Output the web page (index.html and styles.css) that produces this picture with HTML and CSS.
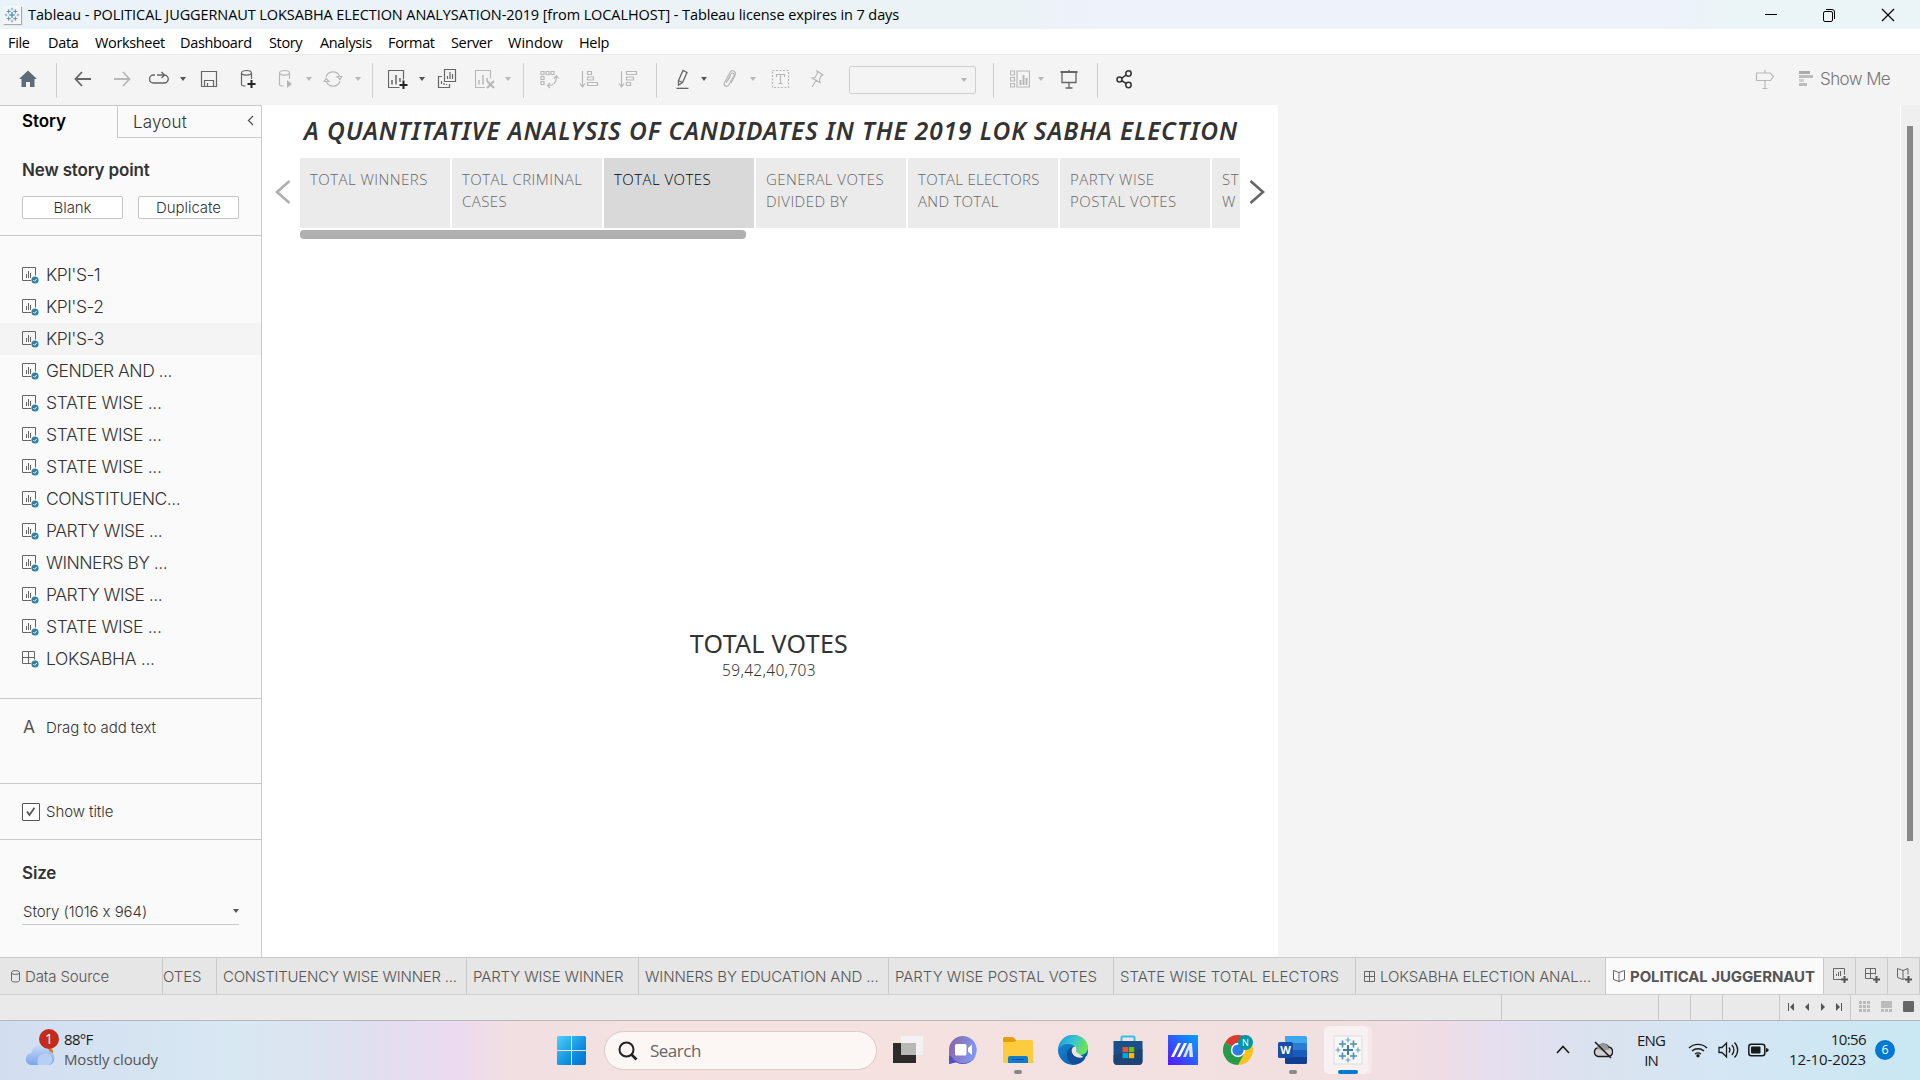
FILE: index.html
```html
<!DOCTYPE html>
<html lang="en">
<head>
<meta charset="utf-8">
<title>Tableau - POLITICAL JUGGERNAUT</title>
<link rel="stylesheet" href="styles.css">
</head>
<body>
<svg class="defs" width="0" height="0">
  <symbol id="sheet" viewBox="0 0 17 17"><path d="M9 13.500H.5V.5h13v8" fill="none" stroke="#666"/><path d="M4.500 7v4M6.500 4v7M8.500 6v5" stroke="#666" fill="none"/><circle cx="13" cy="13" r="3.600" fill="#2f7ea3"/><path d="M11.300 13l1.300 1.300 2.300-2.500" stroke="#fff" fill="none"/></symbol>
  <symbol id="dash" viewBox="0 0 17 17"><path d="M9 12.500H.5V.5h12v8M.5 6.500h12M6.500.5v12" fill="none" stroke="#666"/><circle cx="13" cy="13" r="3.600" fill="#2f7ea3"/><path d="M11.300 13l1.300 1.300 2.300-2.500" stroke="#fff" fill="none"/></symbol>
  <symbol id="caret" viewBox="0 0 6 4"><path d="M0 0h6L3 4z" fill="currentColor"/></symbol>
  <symbol id="logo" viewBox="0 0 30 30"><g fill="none" stroke-width="1.600" stroke="#3d7ea6"><path d="M15 10v10M10 15h10" stroke-width="2"/><path d="M9.500 5.500v7M6 9h7M20.500 5.500v7M17 9h7M9.500 17.500v7M6 21h7M20.500 17.500v7M17 21h7" stroke="#4f8fb0"/><path d="M15 2.500v5M12.500 5h5M15 22.500v5M12.500 25h5M5 12.500v5M2.500 15h5M25 12.500v5M22.500 15h5" stroke-width="1.200" stroke="#6ba3c4"/></g></symbol>
</svg>

<header class="titlebar">
  <svg class="app-ico" viewBox="0 0 30 30"><rect width="30" height="30" fill="#f6f6f6"/><use href="#logo" width="30" height="30"/></svg>
  <span class="win-title">Tableau - POLITICAL JUGGERNAUT LOKSABHA ELECTION ANALYSATION-2019 [from LOCALHOST] - Tableau license expires in 7 days</span>
  <div class="win-btns">
    <svg width="14" height="14"><path d="M2 6.500h12" stroke="#000"/></svg>
    <svg width="14" height="14"><path d="M1.500 5a1.500 1.500 0 0 1 1.500-1.500h6A1.500 1.500 0 0 1 10.500 5v7a1.500 1.500 0 0 1-1.500 1.500H3A1.500 1.500 0 0 1 1.500 12zM4 1.500h6A2.500 2.500 0 0 1 12.500 4v7" fill="none" stroke="#000"/></svg>
    <svg width="14" height="14"><path d="M1 1l12 12M13 1L1 13" stroke="#000" stroke-width="1.200"/></svg>
  </div>
</header>

<nav class="menubar">
  <span>File</span><span>Data</span><span>Worksheet</span><span>Dashboard</span><span>Story</span><span>Analysis</span><span>Format</span><span>Server</span><span class="loose">Window</span><span>Help</span>
</nav>

<div class="toolbar">
  <svg class="i m18" viewBox="0 0 20 20"><path d="M10 1.500L1 10h2.500v8H8v-5h4v5h4.500v-8H19z" fill="#5f6b78"/></svg>
  <i class="sep m18"></i>
  <svg class="i m16" viewBox="0 0 20 20"><path d="M18 10H3M9 3L2.500 10 9 17" stroke-width="1.800"/></svg>
  <svg class="i m19 off" viewBox="0 0 20 20"><path d="M2 10h15M11 3l6.500 7-6.500 7" stroke-width="1.800"/></svg>
  <svg class="i m17" viewBox="0 0 20 20"><path d="M6 6H4.500a3.800 3.800 0 0 0 0 8H15a3.800 3.800 0 0 0 .5-8H8M12.500 3l3 3-3 3" stroke-width="1.400"/></svg>
  <svg class="c m11"><use href="#caret"/></svg>
  <svg class="i m13" viewBox="0 0 20 20"><path d="M2.500 2.500h15v15h-15zM5.500 17.500v-6h9v6M8.500 17v-3"/></svg>
  <svg class="i m19" viewBox="0 0 20 20"><path d="M3.500 4v11.500c0 1 2 1.500 4 1.500M13.500 4v6"/><ellipse cx="8.500" cy="3.800" rx="5" ry="2.300"/><path d="M13.500 11v8M9.500 15h8" stroke="#222" stroke-width="2"/></svg>
  <svg class="i m18 off" viewBox="0 0 20 20"><path d="M3.500 4v11.500c0 1 2 1.500 4 1.500M13.500 4v6"/><ellipse cx="8.500" cy="3.800" rx="5" ry="2.300"/><path d="M11 11l5 4-5 4z" fill="#b4b4b4"/></svg>
  <svg class="c m10 off"><use href="#caret"/></svg>
  <svg class="i m11 off" viewBox="0 0 20 20"><path d="M3 8a7.300 7.300 0 0 1 13.500-1M17 12a7.300 7.300 0 0 1-13.500 1M14 7.500h5l-2 3zM6 12.500H1l2-3z"/></svg>
  <svg class="c m12 off"><use href="#caret"/></svg>
  <i class="sep m11"></i>
  <svg class="i m15" viewBox="0 0 20 20"><path d="M11.500 18.500H.5v-17h15v9"/><path d="M4 11v4.500M8 6v9.500M12 9v4" stroke-width="1.500"/><path d="M15.500 11.500v8.500M11.500 16h8" stroke="#222" stroke-width="2"/></svg>
  <svg class="c m11"><use href="#caret"/></svg>
  <svg class="i m12" viewBox="0 0 20 20"><path d="M7.500.5h11v12h-11zM5 7.500H1.500v11h11V15M10.500 10V7M13 10V3M15.500 10V5M4.500 15v-3M7 16v-2M9.500 16v-1"/></svg>
  <svg class="i m18 off" viewBox="0 0 20 20"><path d="M10 18.500H.5v-17h15v8"/><path d="M4 11v4.500M8 6v9.500M12 9v3" stroke-width="1.500"/><path d="M12 12l7 7M19 12l-7 7" stroke-width="2"/></svg>
  <svg class="c m10 off"><use href="#caret"/></svg>
  <i class="sep m12"></i>
  <svg class="i m15 off" viewBox="0 0 20 20"><path d="M2 2.500h3v3H2zM7 2.500h3v3H7zM12 2.500h3v3h-3zM2 7.500h3v3H2zM2 12.500h3v3H2zM17.500 8c0 5-3 8.500-8 8.500M15 9.500L17.500 7l2 2.500M11 14l-2.500 2.500L11 19"/></svg>
  <svg class="i m20 off" viewBox="0 0 20 20"><path d="M3.500 2v15M1 14.500L3.500 18 6 14.500M8.500 2.500h4v3h-4zM8.500 8h6v3h-6zM8.500 13.500h10v3h-10z"/></svg>
  <svg class="i m19 off" viewBox="0 0 20 20"><path d="M3.500 2v15M1 14.500L3.500 18 6 14.500M8.500 2.500h10v3h-10zM8.500 8h7v3h-7zM8.500 13.500h4v3h-4z"/></svg>
  <i class="sep m18"></i>
  <svg class="i m15" viewBox="0 0 20 20"><path d="M6.500 11.500L11 1.500l4 2-4.500 10-4 2.500zM6.500 11.500l4 2" stroke-width="1.300"/><path d="M4.500 19.800h12" stroke-width="2.200"/></svg>
  <svg class="c m9"><use href="#caret"/></svg>
  <svg class="i m12 off" viewBox="0 0 20 20"><path d="M7 14l5-9c1-2 4-.5 3 1.500l-5 9c-2 3.500-6 1.500-4.500-2L11 3.500c2-3.500 7-1 5 3L12 14M8.500 12l3-5"/></svg>
  <svg class="c m11 off"><use href="#caret"/></svg>
  <svg class="i m14 off" viewBox="0 0 20 20"><path d="M2.500 1.500h16v17h-16z" stroke-dasharray="2 1.500"/><path d="M6.500 8V5.500h8V8M10.500 5.500v9M8.500 14.500h4"/></svg>
  <svg class="i m17 off" viewBox="0 0 20 20"><path d="M10 2l6 4-2 1-1.500 3.500.5 3L5 9l3-.5L10.500 4zM9 11.500L5 18"/></svg>
  <div class="combo m22"><svg class="c off"><use href="#caret"/></svg></div>
  <i class="sep m17"></i>
  <svg class="i m16 off" viewBox="0 0 20 20"><path d="M.5 2h4v4h-4zM.5 8.500h4v3.500h-4zM.5 14.500h4v3.500h-4zM7 2h12.500v16H7z"/><path d="M10.500 11v5M13.500 6v10M16.500 9v7" stroke-width="2"/></svg>
  <svg class="c m8 off"><use href="#caret"/></svg>
  <svg class="i m15" viewBox="0 0 20 20"><path d="M1.500 3h17" stroke-width="2"/><path d="M3 4v9.500h14V4M10 1v2M10 13.500V19M6.500 19h7" stroke-width="1.300"/></svg>
  <i class="sep m18"></i>
  <svg class="i m16 dark" viewBox="0 0 20 20"><circle cx="5.500" cy="10.500" r="2.500"/><circle cx="14.500" cy="4.500" r="2.700"/><circle cx="14.500" cy="16" r="2.700"/><path d="M7.700 9.200l4.400-3M7.700 11.700l4.400 2.800"/></svg>
  <svg class="i off push" viewBox="0 0 20 20"><path d="M1.500 4h14l3 3.500-3 4h-14zM10 1v3M10 11.500v8M7.500 19.500h5"/></svg>
  <svg class="showme-ico" width="14" height="16"><path d="M0 0h11v3H0z" fill="#aaa"/><path d="M0 4h14v3H0z" fill="#bdbdbd"/><path d="M0 8h5v3H0z" fill="#cfcfcf"/><path d="M0 12h8v3H0z" fill="#bdbdbd"/></svg>
  <span class="showme">Show Me</span>
</div>

<main class="work">
  <aside class="side">
    <div class="tabs">
      <div class="tab-on">Story</div>
      <div class="tab-off"><span>Layout</span><svg width="8" height="11"><path d="M6 1L1.500 5.500 6 10" fill="none" stroke="#555" stroke-width="1.300"/></svg></div>
    </div>
    <section class="s-new">
      <h3>New story point</h3>
      <div class="btns"><button>Blank</button><button>Duplicate</button></div>
    </section>
    <ul class="list">
      <li><svg><use href="#sheet"/></svg><span>KPI'S-1</span></li>
      <li><svg><use href="#sheet"/></svg><span>KPI'S-2</span></li>
      <li class="hover"><svg><use href="#sheet"/></svg><span>KPI'S-3</span></li>
      <li><svg><use href="#sheet"/></svg><span>GENDER AND ...</span></li>
      <li class="wide"><svg><use href="#sheet"/></svg><span>STATE WISE ...</span></li>
      <li class="wide"><svg><use href="#sheet"/></svg><span>STATE WISE ...</span></li>
      <li class="wide"><svg><use href="#sheet"/></svg><span>STATE WISE ...</span></li>
      <li><svg><use href="#sheet"/></svg><span>CONSTITUENC...</span></li>
      <li><svg><use href="#sheet"/></svg><span>PARTY WISE ...</span></li>
      <li><svg><use href="#sheet"/></svg><span>WINNERS BY ...</span></li>
      <li><svg><use href="#sheet"/></svg><span>PARTY WISE ...</span></li>
      <li class="wide"><svg><use href="#sheet"/></svg><span>STATE WISE ...</span></li>
      <li class="wide"><svg><use href="#dash"/></svg><span>LOKSABHA ...</span></li>
    </ul>
    <section class="s-drag"><b>A</b><span>Drag to add text</span></section>
    <section class="s-show"><span class="check"><svg width="10" height="10"><path d="M1 4.500l2.500 3.500L8.500.8" fill="none" stroke="#555" stroke-width="1.800"/></svg></span><span>Show title</span></section>
    <section class="s-size">
      <h3>Size</h3>
      <div class="select"><span>Story (1016 x 964)</span><svg class="c"><use href="#caret"/></svg></div>
    </section>
  </aside>
  <section class="canvas">
    <h1>A QUANTITATIVE ANALYSIS OF CANDIDATES IN THE 2019 LOK SABHA ELECTION</h1>
    <div class="nav">
      <svg width="16" height="26"><path d="M14.500 2L2 13l12.500 11" fill="none" stroke="#b0b0b0" stroke-width="2.600"/></svg>
      <div class="points">
        <div>TOTAL WINNERS</div>
        <div>TOTAL CRIMINAL<br>CASES</div>
        <div class="cur">TOTAL VOTES</div>
        <div>GENERAL VOTES<br>DIVIDED BY</div>
        <div class="snug">TOTAL ELECTORS<br>AND TOTAL</div>
        <div>PARTY WISE<br>POSTAL VOTES</div>
        <div>ST<br>W</div>
      </div>
      <svg width="16" height="26"><path d="M1.500 2L14 13 1.500 24" fill="none" stroke="#666" stroke-width="2.600"/></svg>
    </div>
    <div class="hbar"></div>
    <div class="kpi"><div class="kpi-name">TOTAL VOTES</div><div class="kpi-val">59,42,40,703</div></div>
  </section>
  <div class="vscroll"><div class="thumb"></div></div>
</main>

<div class="sheets">
  <div class="t0"><svg width="9" height="13"><path d="M.5 2.500v8c0 1 1.500 1.500 4 1.500s4-.5 4-1.500v-8M.5 2.500c0-2.500 8-2.500 8 0s-8 2.500-8 0" fill="none" stroke="#666"/></svg><span>Data Source</span></div>
  <div class="t1"><span>OTES</span></div>
  <div class="t2"><span>CONSTITUENCY WISE WINNER ...</span></div>
  <div class="t3"><span>PARTY WISE WINNER</span></div>
  <div class="t4"><span>WINNERS BY EDUCATION AND ...</span></div>
  <div class="t5"><span>PARTY WISE POSTAL VOTES</span></div>
  <div class="t6"><span>STATE WISE TOTAL ELECTORS</span></div>
  <div class="t7"><svg width="11" height="11"><path d="M.5.5h10v10H.5zM.5 5.500h10M5.500.5v10" fill="none" stroke="#666"/></svg><span>LOKSABHA ELECTION ANAL...</span></div>
  <div class="t8"><svg width="12" height="12"><path d="M6 2.500L.5.5v9l5.500 2 5.500-2v-9zv9" fill="none" stroke="#666"/></svg><span>POLITICAL JUGGERNAUT</span></div>
  <div class="tn"><svg width="16" height="16"><path d="M8 11.500H.5V.5h11v6M3.500 8V6M5.500 8V4M7.500 8V3" fill="none" stroke="#666"/><path d="M11.500 8v7M8 11.500h7" stroke="#555" stroke-width="2"/></svg></div>
  <div class="tn"><svg width="16" height="16"><path d="M8 10.500H.5V.5h10v6M.5 5.500h10M5.500.5v10" fill="none" stroke="#666"/><path d="M11.500 8v7M8 11.500h7" stroke="#555" stroke-width="2"/></svg></div>
  <div class="tn"><svg width="16" height="16"><path d="M8 10.500l-2 1-5.500-2v-9L6 2.500l5-2v6M6 2.500v9" fill="none" stroke="#666"/><path d="M11.500 8v7M8 11.500h7" stroke="#555" stroke-width="2"/></svg></div>
</div>
<div class="status">
  <i class="w157"></i><i class="w32"></i><i class="w32"></i><i class="w57"></i>
  <div class="pager">
    <svg width="7" height="8"><path d="M.5 0v8" stroke="#555"/><path d="M6 0v8L2 4z" fill="#555"/></svg><svg width="7" height="8"><path d="M5 0v8L1 4z" fill="#555"/></svg><svg width="7" height="8"><path d="M1 0v8l4-4z" fill="#555"/></svg><svg width="7" height="8"><path d="M5.500 0v8" stroke="#555"/><path d="M0 0v8l4-4z" fill="#555"/></svg>
  </div>
  <div class="views">
    <svg width="11" height="11"><path d="M0 0h3v3H0zM4 0h3v3H4zM8 0h3v3H8zM0 4h3v3H0zM4 4h3v3H4zM8 4h3v3H8zM0 8h3v3H0zM4 8h3v3H4zM8 8h3v3H8z" fill="#bbb"/></svg>
    <svg width="11" height="11"><path d="M0 0h11v7H0zM0 8h3v3H0zM4 8h3v3H4zM8 8h3v3H8z" fill="#bbb"/></svg>
    <svg width="11" height="11"><rect width="11" height="11" rx="1" fill="#666"/></svg>
  </div>
</div>

<footer class="taskbar">
  <div class="weather">
    <svg width="36" height="38" viewBox="0 0 36 38">
      <defs><linearGradient id="cl" x1="0" y1="0" x2="0" y2="1"><stop offset="0" stop-color="#c8dcf8"/><stop offset="1" stop-color="#7ba5e6"/></linearGradient></defs>
      <circle cx="23" cy="23" r="5" fill="#f0701c"/><path d="M7 36a6 6 0 0 1-.5-12A9 9 0 0 1 20 17a8 8 0 0 1 4.500 5.500A7 7 0 0 1 24 36z" fill="url(#cl)"/><path d="M13 36c-3-8 5-13 10-11a6 6 0 0 1 1 11z" fill="#b5cff5"/>
      <circle cx="24" cy="10" r="10" fill="#c42b1c"/><text x="24" y="15" text-anchor="middle" font-size="14" fill="#fff">1</text>
    </svg>
    <div class="w-text"><div class="deg">88°F</div><div class="soft">Mostly cloudy</div></div>
  </div>
  <svg width="30" height="30"><defs><linearGradient id="wn" x1="0" y1="0" x2="1" y2="1"><stop offset="0" stop-color="#4fd0fa"/><stop offset=".6" stop-color="#0f8fe0"/><stop offset="1" stop-color="#0070d0"/></linearGradient></defs><path d="M0 1.500Q0 0 1.500 0H14v14H0zM15 0h12.500Q29 0 29 1.500V14H15zM0 15h14v14H1.500Q0 29 0 27.500zM15 15h14v12.500q0 1.500-1.500 1.500H15z" fill="url(#wn)"/></svg>
  <div class="search"><svg width="20" height="20"><circle cx="8.500" cy="8.500" r="7" fill="none" stroke="#222" stroke-width="2"/><path d="M13.500 13.500l5 5" stroke="#222" stroke-width="2.600"/></svg><span>Search</span></div>
  <div class="apps">
    <svg viewBox="0 0 30 30"><path d="M0 8h23v20H0z" fill="#2c2b2a"/><path d="M8 1h22v19H8z" fill="#f2f2f2"/><path d="M8 8h15v12H8z" fill="#b9b8b7"/></svg>
    <svg viewBox="0 0 30 30"><defs><linearGradient id="ch" x1="0" y1="0" x2="1" y2=".3"><stop offset="0" stop-color="#8a62a6"/><stop offset="1" stop-color="#7f98ef"/></linearGradient></defs><path d="M15 1a14 14 0 1 1-7 26.300L1 29V15A14 14 0 0 1 15 1z" fill="url(#ch)"/><path d="M3 21a14 14 0 0 0 25-1c-2 6-8 9-13 9a14 14 0 0 1-7-1.700L1 29v-8z" fill="#4f52c4"/><rect x="7" y="9" width="11.500" height="11.500" rx="1.500" fill="#fff"/><path d="M20 13l4-3.500v10.500l-4-3.500z" fill="#fff"/></svg>
    <div class="run"><svg viewBox="0 0 30 30"><path d="M0 3.500Q0 2 1.500 2H10l3 3v4H0z" fill="#dfa000"/><path d="M0 7h11l3-2h14.500Q30 5 30 6.500V28H1.500Q0 28 0 26.500z" fill="#fecb3e"/><path d="M5 28v-5q0-2 2-2h16q2 0 2 2v5z" fill="#0f7cd0"/><path d="M9 24.500h12" stroke="#0a4f94"/></svg></div>
    <svg viewBox="0 0 30 30"><defs><linearGradient id="e1" x1="0" y1="0" x2="1" y2=".4"><stop offset="0" stop-color="#1a9be0"/><stop offset=".5" stop-color="#35c1d8"/><stop offset="1" stop-color="#6be35a"/></linearGradient><linearGradient id="e2" x1="0" y1="0" x2="1" y2="1"><stop offset="0" stop-color="#1590dc"/><stop offset="1" stop-color="#0d4e9c"/></linearGradient></defs><circle cx="15" cy="15" r="15" fill="url(#e2)"/><path d="M1 13C2 5 8 0 15 0c9 0 15 6 15 12.500 0 5-4 7.500-8 7.500-3 0-5-1-4-2.500C20 14 16 9 10 9c-4 0-7 1.500-9 4z" fill="url(#e1)"/><path d="M14 14c-1 4 2 9 8 9 3 0 5-1 7-2l1-1v4l-2 0" fill="#f3e1e0"/><path d="M9 20c0-5 3-8 6-8l2 3c-2 0-3 2-2 4 2 4 8 5 13 2-2 5-8 9-12 8.500C11 28 9 24 9 20z" fill="#104f97"/><path d="M17.500 11.500c-3 0-4.500 3-3.500 6 .8 2 2 3 3.500 4-.6-1.500 0-2 .5-3.500s1-4-.5-6.500z" fill="#f3e1e0"/></svg>
    <svg viewBox="0 0 30 30"><path d="M8.500 7V2.500q0-1 1-1h11q1 0 1 1V7" fill="none" stroke="#2cc3ee" stroke-width="2"/><path d="M.5 6h29v20q0 4-4 4h-21q-4 0-4-4z" fill="#17508b"/><path d="M.5 20L29.500 14v12q0 4-4 4h-21q-4 0-4-4z" fill="#20406f" opacity=".8"/><path d="M9.500 12H15v5.200H9.500z" fill="#f25022"/><path d="M15.800 12h5.400v5.200h-5.400z" fill="#7fba00"/><path d="M9.500 18H15v5.200H9.500z" fill="#00a4ef"/><path d="M15.800 18h5.400v5.200h-5.400z" fill="#ffb900"/></svg>
    <svg viewBox="0 0 30 30"><defs><linearGradient id="ma" x1="0" y1="1" x2="1" y2="0"><stop offset="0" stop-color="#5a14ff"/><stop offset="1" stop-color="#00a4ff"/></linearGradient></defs><path d="M0 0h30v30H0z" fill="url(#ma)"/><path d="M3 22L10 8h3L6 22zM9 22l7-14h3l-7 14z" fill="#fff"/><path d="M15 22l6-14h3l1 14h-3.500l-.5-8-3 8z" fill="#dfe6ff"/></svg>
    <svg viewBox="0 0 30 30"><path d="M15 15L2 7.500A15 15 0 0 1 28 7.500z" fill="#db3a2e"/><path d="M15 15l13-7.500A15 15 0 0 1 15 30z" fill="#fcc31e"/><path d="M15 15l6 4-6 11A15 15 0 0 1 2 7.500z" fill="#259b4b"/><circle cx="15" cy="15" r="7.200" fill="#fff"/><circle cx="15" cy="15" r="5.600" fill="#2a7de8"/><circle cx="22.500" cy="7.500" r="7.500" fill="#0097a7"/><text x="22.500" y="11" text-anchor="middle" font-size="9" fill="#fff">N</text></svg>
    <div class="run"><svg viewBox="0 0 30 30"><path d="M7 1h20.500q1.500 0 1.500 1.500V8H7z" fill="#41a5ee"/><path d="M7 8h22v7H7z" fill="#2b7cd3"/><path d="M7 15h22v7H7z" fill="#185abd"/><path d="M7 22h22v5.500q0 1.500-1.500 1.500H8.500Q7 29 7 27.500z" fill="#103f91"/><rect y="7" width="15" height="16" rx="1.500" fill="#174fa8"/><text x="7.500" y="19" text-anchor="middle" font-size="11" font-weight="700" fill="#fff">W</text></svg></div>
    <div class="run active"><svg viewBox="0 0 30 30"><path d="M1 1h28v28H1z" fill="#f7f7f7" stroke="#ddd"/><use href="#logo" width="30" height="30"/></svg></div>
  </div>
  <div class="tray">
    <svg width="14" height="9"><path d="M1 8l6-6.500L13 8" fill="none" stroke="#1a1a1a" stroke-width="1.600"/></svg>
    <svg class="cloud" width="20" height="18"><path d="M5 15.500a4.500 4.500 0 0 1 0-8.800A6 6 0 0 1 15.500 6a4.800 4.800 0 0 1 0 9.500z" fill="#d0d0d0" stroke="#1a1a1a" stroke-width="1.400"/><path d="M4 7.500a6 6 0 0 1 11.500-1l1 2-7 1.500z" fill="#999"/><path d="M2 1l16 16" stroke="#1a1a1a" stroke-width="1.600"/></svg>
    <div class="lang"><span>ENG</span><span>IN</span></div>
    <svg class="wifi" width="20" height="16"><path d="M1 6a13 13 0 0 1 18 0M4 9a9 9 0 0 1 12 0M7 12a5 5 0 0 1 6 0" fill="none" stroke="#1a1a1a" stroke-width="1.400"/><circle cx="10" cy="13.800" r="1.700" fill="#1a1a1a"/></svg>
    <svg class="vol" width="21" height="18"><path d="M1 6.500h3L8.500 2v14L4 11.500H1zM11 6.500a4 4 0 0 1 0 5M13.800 4a7 7 0 0 1 0 10M16.500 1.500a10.500 10.500 0 0 1 0 15" fill="none" stroke="#1a1a1a" stroke-width="1.300"/></svg>
    <svg class="bat" width="21" height="14"><rect x=".8" y="1.300" width="16" height="11.500" rx="2.500" fill="none" stroke="#1a1a1a" stroke-width="1.500"/><rect x="3" y="3.500" width="9.500" height="7" rx="1" fill="#1a1a1a"/><path d="M18 5l2.500 1v2L18 9.500z" fill="#1a1a1a"/></svg>
    <div class="clock"><span class="time">10:56</span><span>12-10-2023</span></div>
    <div class="badge">6</div>
  </div>
</footer>
</body>
</html>
```
FILE: styles.css
```css
* { box-sizing: border-box; }
body { margin: 0; width: 1920px; height: 1080px; overflow: hidden; display: flex; flex-direction: column; font-family: "Inter", "Liberation Sans", sans-serif; font-weight: 300; color: #333; background: #f4f4f4; }
span, .points, h1, h3 { white-space: nowrap; }
svg { flex: none; display: block; }
h1, h3, ul { margin: 0; padding: 0; }
.defs { position: absolute; }

.titlebar, .menubar, .taskbar { font-family: "Open Sans", "Noto Sans", sans-serif; font-weight: 400; color: #000; }
.titlebar { height: 29px; flex: none; display: flex; align-items: center; font-size: 14.5px; padding-left: 3px; background: linear-gradient(90deg, #ebf3fa 0, #ebf3f6 1000px, #eef2fb 1110px, #eef2fb 1660px, #ebf4f7 1720px, #ebf4f7 100%); }
.app-ico { width: 18px; height: 18px; box-shadow: 1px 1px 1px #aaa; margin-right: 7px; }
.win-title { letter-spacing: -.09px; }
.win-btns { margin-left: auto; display: flex; gap: 45px; padding-right: 25px; }

.menubar { height: 25px; flex: none; background: #fff; display: grid; grid-template-columns: 40px 47px 85px 89px 51px 68px 63px 57px 71px 40px; align-items: center; padding: 1px 0 0 8px; font-size: 14.5px; letter-spacing: -.35px; }
.loose { letter-spacing: 0; }

.toolbar { height: 51px; flex: none; display: flex; align-items: center; background: #f4f4f4; border-top: 1px solid #ebebeb; padding-bottom: 2px; }
.i { width: 20px; height: 20px; fill: none; stroke: #666; stroke-width: 1.2; }
.i path[fill] { stroke: none; }
.i.off { stroke: #b8b8b8; }
.i.dark { stroke: #333; stroke-width: 1.5; }
.c { width: 6px; height: 4px; color: #555; }
.c.off { color: #b8b8b8; }
.sep { width: 1px; height: 35px; background: #cfcfcf; margin-top: 2px; }
.m8 { margin-left: 8px; } .m9 { margin-left: 9px; } .m10 { margin-left: 10px; } .m11 { margin-left: 11px; }
.m12 { margin-left: 12px; } .m13 { margin-left: 13px; } .m14 { margin-left: 14px; } .m15 { margin-left: 15px; }
.m16 { margin-left: 16px; } .m17 { margin-left: 17px; } .m18 { margin-left: 18px; } .m19 { margin-left: 19px; }
.m20 { margin-left: 20px; } .m22 { margin-left: 22px; }
.push { margin-left: auto; }
.combo { width: 127px; height: 28px; margin-top: 2px; border: 1px solid #d0d0d0; border-radius: 2px; display: flex; align-items: center; justify-content: flex-end; padding-right: 8px; }
.showme-ico { margin-left: 24px; margin-right: 7px; }
.showme { font-size: 17px; letter-spacing: -.6px; width: 70px; margin-right: 30px; color: #777; }

.work { height: 852px; flex: none; display: flex; }
.side { width: 262px; background: #fafafa; border-right: 1px solid #c9c9c9; border-top: 1px solid #c9c9c9; display: flex; flex-direction: column; font-size: 15px; letter-spacing: -.07px; }
.tabs { height: 32px; display: flex; font-size: 17px; color: #000; }
.tab-on { width: 117px; padding: 5px 0 0 22px; font-weight: 600; }
.tab-off { flex: 1; border-left: 1px solid #c9c9c9; border-bottom: 1px solid #c9c9c9; padding: 0 6px 0 15px; display: flex; align-items: center; justify-content: space-between; color: #333; letter-spacing: .19px; }
.tab-off svg { margin-bottom: 2px; }
.s-new { height: 98px; border-bottom: 1px solid #c9c9c9; padding: 22px 22px 0; }
h3 { font-size: 17px; line-height: 20px; font-weight: 600; color: #333; letter-spacing: -.15px; }
.btns { display: flex; justify-content: space-between; margin-top: 16px; }
button { width: 101px; height: 23px; background: #fff; border: 1px solid #c6c6c6; border-radius: 2px; font: inherit; letter-spacing: inherit; color: inherit; padding: 0; line-height: 20px; }
.list { list-style: none; height: 463px; padding-top: 23px; border-bottom: 1px solid #c9c9c9; font-size: 17.5px; letter-spacing: -.52px; }
.list li { height: 32px; display: flex; align-items: center; padding: 0 0 2px 22px; gap: 7px; }
.list .wide { letter-spacing: -.33px; }
.list svg { width: 17px; height: 17px; margin-top: 3px; }
.hover { background: #f4f4f4; }
.s-drag { height: 85px; border-bottom: 1px solid #c9c9c9; padding: 18px 0 0 23px; display: flex; line-height: 22px; }
.s-drag b { width: 23px; font-weight: 400; font-size: 17.5px; color: #555; margin-top: -1px; }
.s-show { height: 56px; border-bottom: 1px solid #c9c9c9; display: flex; align-items: center; padding-left: 22px; gap: 6px; }
.check { width: 18px; height: 18px; border: 1px solid #555; border-radius: 1px; background: #fff; padding: 3px; }
.s-size { padding: 23px 22px 0; }
.select { height: 27px; margin-top: 15px; border-bottom: 1px solid #c9c9c9; display: flex; align-items: center; justify-content: space-between; padding-left: 1px; }

.canvas { width: 1016px; background: #fff; display: flex; flex-direction: column; }
h1 { font: italic 600 24.5px/30px "Noto Sans", "Open Sans", sans-serif; letter-spacing: .91px; height: 53px; padding: 11px 0 0 42px; color: #333; }
.nav { display: flex; height: 70px; align-items: center; padding: 0 13px; }
.nav > svg { margin-bottom: 2px; }
.points { flex: 1; height: 70px; margin: 0 9px; overflow: hidden; display: flex; gap: 2px; font: 300 15px/22px "Open Sans", "Noto Sans", sans-serif; letter-spacing: .45px; color: #666; }
.points div { width: 150px; flex: none; background: #ebebeb; padding: 10px; }
.points .cur { background: #d9d9d9; color: #000; }
.points .snug { letter-spacing: .28px; }
.hbar { width: 446px; height: 9px; border-radius: 4px; background: #b0b0b0; margin: 2px 0 0 38px; }
.kpi { margin-top: 388px; padding-right: 2px; text-align: center; font-family: "Noto Sans", "Open Sans", sans-serif; letter-spacing: .3px; }
.kpi-name { font-size: 25px; line-height: 32px; font-weight: 400; }
.kpi-val { font-size: 15.5px; line-height: 23px; font-weight: 300; }
.vscroll { margin-left: auto; width: 20px; border-left: 1px solid #fff; background: #efefef; padding: 21px 0 0 6px; }
.thumb { width: 6px; height: 715px; background: #888; }

.sheets { height: 38px; flex: none; display: flex; background: #e6e6e6; border-top: 1px solid #c9c9c9; border-bottom: 1px solid #cfcfcf; font-size: 15px; color: #555; letter-spacing: -.13px; }
.sheets > div { border-right: 1px solid #c9c9c9; display: flex; align-items: center; padding-left: 6px; overflow: hidden; flex: none; }
.sheets .t0 { width: 163px; padding-left: 11px; gap: 5px; }
.sheets .t1 { width: 54px; padding-left: 0; }
.t2 { width: 250px; letter-spacing: -.23px; } .t3 { width: 172px; } .t4 { width: 250px; }
.t5 { width: 225px; letter-spacing: -.03px; } .t6 { width: 242px; letter-spacing: .04px; }
.sheets .t7 { width: 250px; padding-left: 8px; gap: 5px; }
.sheets .t8 { width: 218px; padding-left: 7px; gap: 5px; background: #fafafa; font-weight: 700; letter-spacing: -.09px; }
.sheets .tn { width: 32px; padding-left: 9px; }
.status { height: 26px; flex: none; background: #eaeaea; border-bottom: 1px solid #b8b8bc; display: flex; padding-left: 1501px; }
.status i, .pager { border-left: 1px solid #c9c9c9; }
.w157 { width: 157px; } .w32 { width: 32px; } .w57 { width: 57px; }
.pager { width: 71px; display: flex; align-items: center; gap: 9px; padding-left: 8px; padding-bottom: 2px; }
.views { flex: 1; border-left: 1px solid #c9c9c9; display: flex; gap: 11px; align-items: center; padding: 0 0 2px 8px; }

.taskbar { height: 59px; flex: none; display: flex; align-items: center; font-size: 15px; color: #1a1a1a; background: linear-gradient(90deg, #d2def0 0, #d8e8f3 240px, #e0dfef 370px, #ecdaf0 460px, #f1dfe2 510px, #f5e2e0 680px, #f2e0e1 1340px, #efdde5 1440px, #e6dfef 1490px, #dae2ef 1590px, #d5e6f4 1720px, #c9e8f2 100%); }
.weather { width: 557px; display: flex; gap: 3px; padding-left: 25px; align-items: center; }
.weather svg { margin-bottom: 6px; }
.w-text { line-height: 20px; margin-bottom: 4px; letter-spacing: -.17px; }
.deg { letter-spacing: -.67px; }
.soft { color: #555; }
.search { width: 273px; height: 39px; margin-left: 17px; border: 1px solid #dccac9; border-radius: 20px; background: #fcf6f5; display: flex; align-items: center; gap: 12px; padding-left: 13px; font-size: 17px; letter-spacing: -.5px; color: #666; }
.search span { margin-bottom: 1px; }
.apps { display: flex; gap: 25px; margin-left: 16px; margin-bottom: 1px; }
.apps svg { width: 30px; height: 30px; }
.run { position: relative; }
.run::after { content: ""; position: absolute; left: 11px; top: 35px; width: 8px; height: 4px; border-radius: 2px; background: #888; }
.active::before { content: ""; position: absolute; left: -9px; top: -9px; width: 44px; height: 48px; border-radius: 5px; background: #f9f1f1; box-shadow: 4px 0 0 #f5e9e9; }
.active svg { position: relative; }
.active::after { left: 5px; width: 20px; background: #0078d4; }
.tray { margin-left: auto; display: flex; align-items: center; margin-bottom: 2px; }
.cloud { margin-left: 23px; }
.lang { width: 30px; margin-left: 23px; display: flex; flex-direction: column; align-items: center; line-height: 20px; letter-spacing: -.9px; }
.wifi { margin-left: 22px; } .vol { margin-left: 10px; } .bat { margin-left: 9px; }
.clock { width: 97px; display: flex; flex-direction: column; align-items: flex-end; line-height: 20px; letter-spacing: -.13px; margin-bottom: 2px; }
.time { letter-spacing: -.6px; }
.badge { width: 20px; height: 20px; border-radius: 50%; background: #0078d4; color: #fff; font-size: 12.5px; line-height: 19px; text-align: center; margin: 0 25px 0 9px; }
```
